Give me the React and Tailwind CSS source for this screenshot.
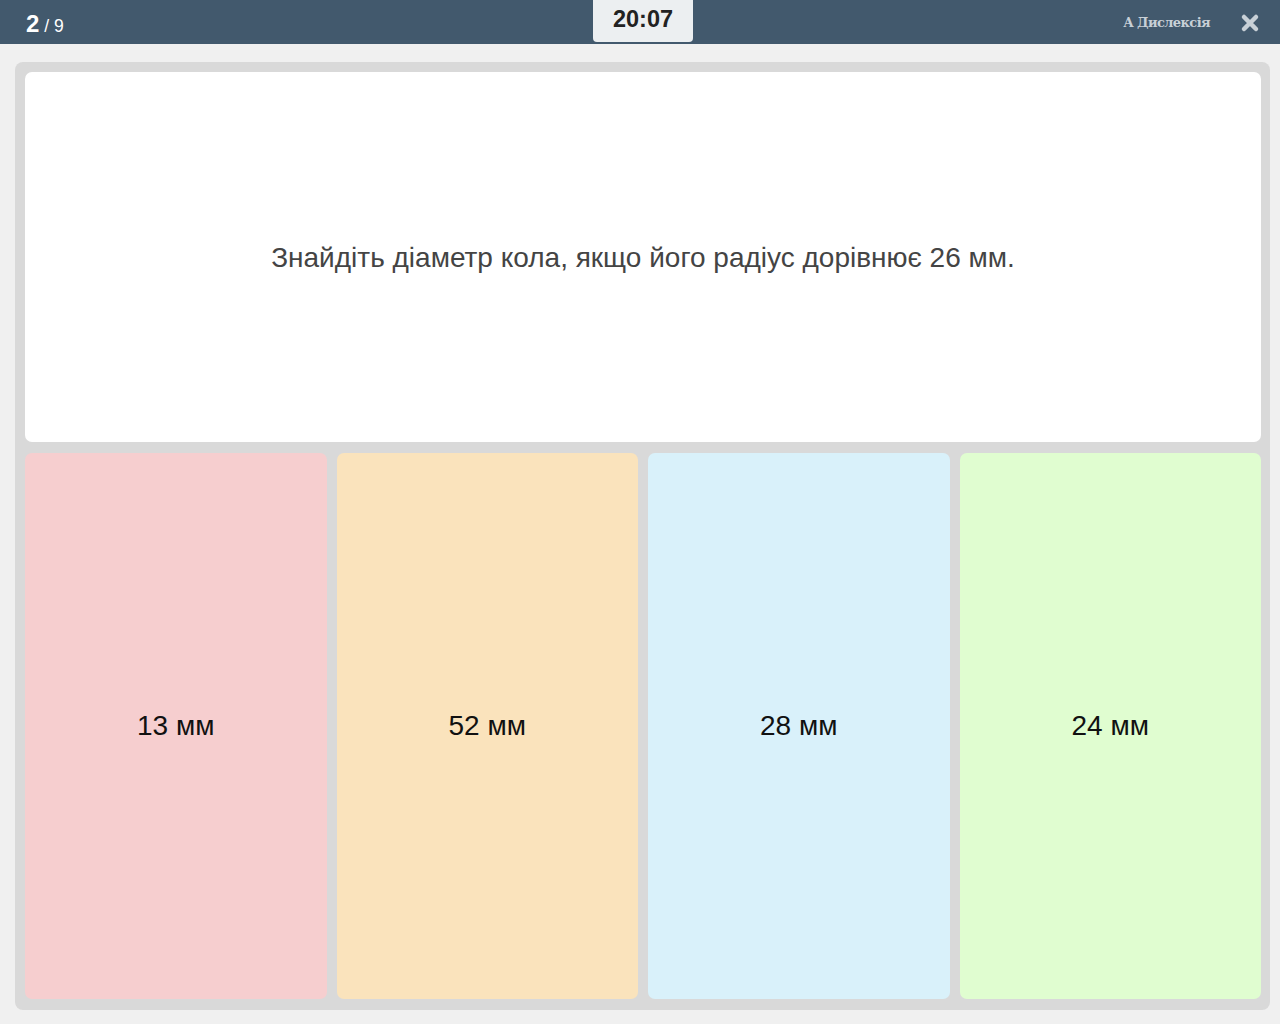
import React from 'react';

const ANSWERS = [
  { text: '13 мм', bg: 'bg-[#f6cecf]' },
  { text: '52 мм', bg: 'bg-[#fae3bc]' },
  { text: '28 мм', bg: 'bg-[#d9f1fa]' },
  { text: '24 мм', bg: 'bg-[#e0fdd0]' },
];

export default function App() {
  return (
    <div className="w-[1280px] h-[1024px] bg-[#f0f0f0] flex flex-col font-['Liberation_Sans',Arial,sans-serif]">
      {/* Top bar */}
      <header className="h-[44px] bg-[#42596d] flex items-start justify-between relative shrink-0">
        <div className="pl-[26px] pt-[12px] text-white flex items-baseline gap-[5px]">
          <span className="text-[24px] font-bold leading-none">2</span>
          <span className="text-[17.5px] leading-none">/ 9</span>
        </div>
        <div className="absolute left-[593px] top-0 w-[100px] h-[42px] bg-[#eceff1] rounded-b-[4px] flex items-center justify-center">
          <span className="text-[23.5px] font-bold text-[#222] -mt-[2px]">20:07</span>
        </div>
        <div className="flex items-center pt-[12px] pr-[20px] gap-[30px]">
          <span className="text-[#c8d0d7] text-[13px] font-['DejaVu_Serif',serif] font-bold tracking-[-0.6px]">A Дислексія</span>
          <svg width="20" height="20" viewBox="0 0 20 20" className="mt-[1px]">
            <path d="M4 4 L16 16 M16 4 L4 16" stroke="#c8d0d7" strokeWidth="4.5" strokeLinecap="round" />
          </svg>
        </div>
      </header>

      {/* Main panel */}
      <div className="pt-[18px] pl-[15px] pr-[10px]">
        <div className="bg-[#d9d9d9] rounded-[8px] h-[948px] p-[10px] pr-[9px] flex flex-col gap-[11px]">
          <div className="bg-white rounded-[7px] h-[370px] flex items-center justify-center">
            <p className="text-[28px] text-[#444] mt-[2px]">
              Знайдіть діаметр кола, якщо його радіус дорівнює 26 мм.
            </p>
          </div>
          <div className="flex-1 grid grid-cols-4 gap-[10px] pb-[1px]">
            {ANSWERS.map((a) => (
              <div key={a.text} className={`${a.bg} rounded-[7px] flex items-center justify-center`}>
                <span className="text-[28px] text-[#111]">{a.text}</span>
              </div>
            ))}
          </div>
        </div>
      </div>
    </div>
  );
}
